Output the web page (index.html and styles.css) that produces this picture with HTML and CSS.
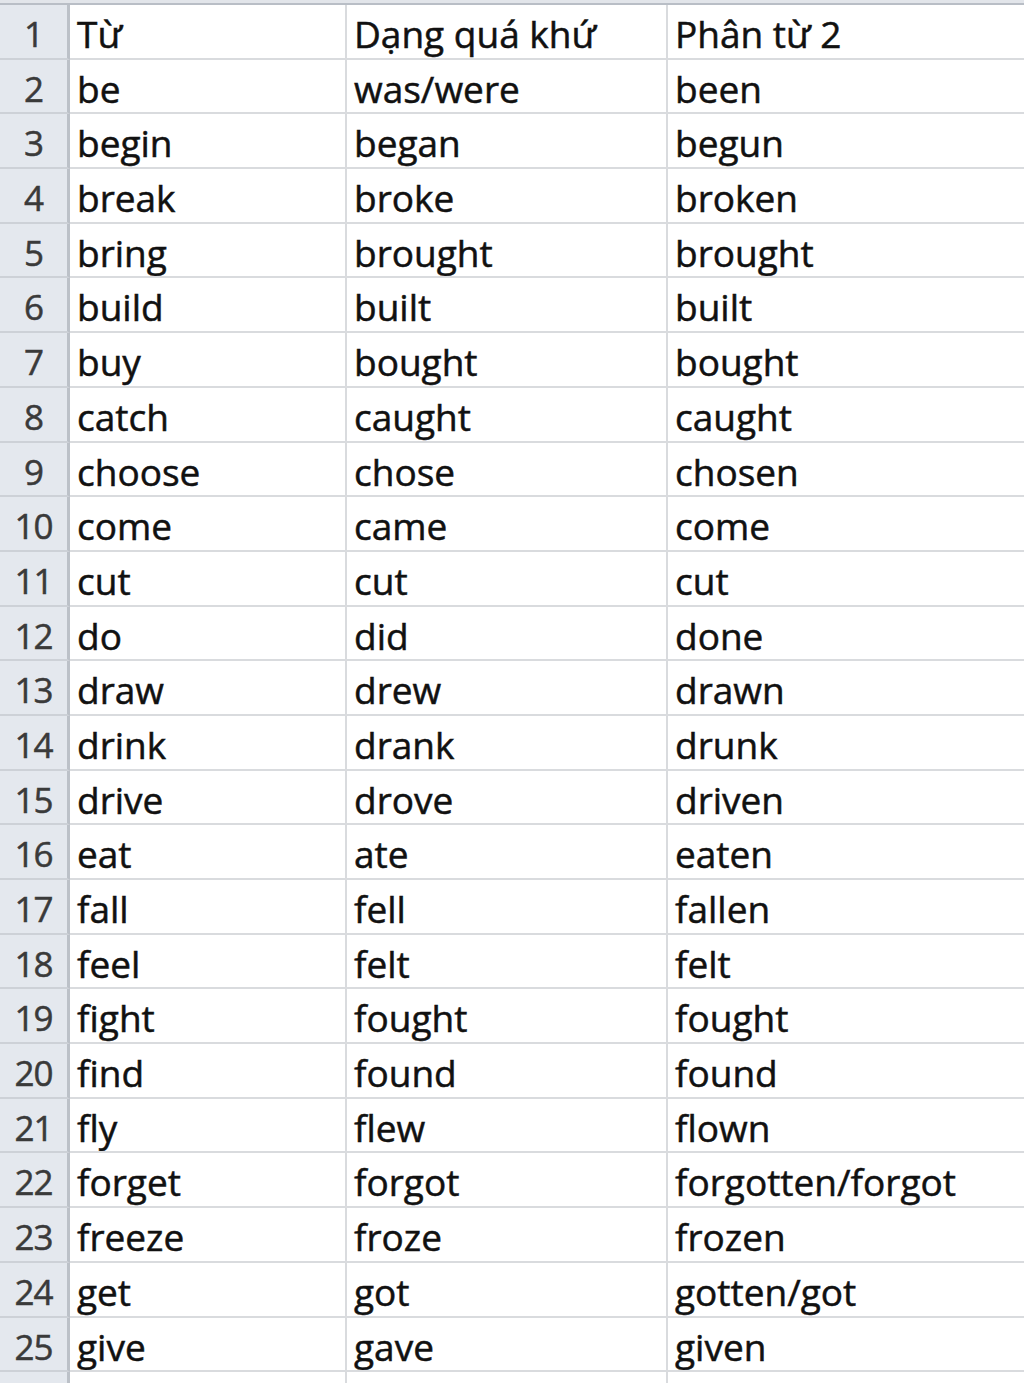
FILE: index.html
```html
<!DOCTYPE html>
<html lang="vi">
<head>
<meta charset="utf-8">
<title>Bảng động từ bất quy tắc</title>
<link rel="stylesheet" href="styles.css">
</head>
<body>
<div class="topbar"></div>
<div class="sheet">
  <div class="rh">1</div><div class="c">Từ</div><div class="c">Dạng quá khứ</div><div class="c">Phân từ 2</div>
  <div class="rh">2</div><div class="c">be</div><div class="c">was/were</div><div class="c">been</div>
  <div class="rh">3</div><div class="c">begin</div><div class="c">began</div><div class="c">begun</div>
  <div class="rh">4</div><div class="c">break</div><div class="c">broke</div><div class="c">broken</div>
  <div class="rh">5</div><div class="c">bring</div><div class="c">brought</div><div class="c">brought</div>
  <div class="rh">6</div><div class="c">build</div><div class="c">built</div><div class="c">built</div>
  <div class="rh">7</div><div class="c">buy</div><div class="c">bought</div><div class="c">bought</div>
  <div class="rh">8</div><div class="c">catch</div><div class="c">caught</div><div class="c">caught</div>
  <div class="rh">9</div><div class="c">choose</div><div class="c">chose</div><div class="c">chosen</div>
  <div class="rh">10</div><div class="c">come</div><div class="c">came</div><div class="c">come</div>
  <div class="rh">11</div><div class="c">cut</div><div class="c">cut</div><div class="c">cut</div>
  <div class="rh">12</div><div class="c">do</div><div class="c">did</div><div class="c">done</div>
  <div class="rh">13</div><div class="c">draw</div><div class="c">drew</div><div class="c">drawn</div>
  <div class="rh">14</div><div class="c">drink</div><div class="c">drank</div><div class="c">drunk</div>
  <div class="rh">15</div><div class="c">drive</div><div class="c">drove</div><div class="c">driven</div>
  <div class="rh">16</div><div class="c">eat</div><div class="c">ate</div><div class="c">eaten</div>
  <div class="rh">17</div><div class="c">fall</div><div class="c">fell</div><div class="c">fallen</div>
  <div class="rh">18</div><div class="c">feel</div><div class="c">felt</div><div class="c">felt</div>
  <div class="rh">19</div><div class="c">fight</div><div class="c">fought</div><div class="c">fought</div>
  <div class="rh">20</div><div class="c">find</div><div class="c">found</div><div class="c">found</div>
  <div class="rh">21</div><div class="c">fly</div><div class="c">flew</div><div class="c">flown</div>
  <div class="rh">22</div><div class="c">forget</div><div class="c">forgot</div><div class="c">forgotten/forgot</div>
  <div class="rh">23</div><div class="c">freeze</div><div class="c">froze</div><div class="c">frozen</div>
  <div class="rh">24</div><div class="c">get</div><div class="c">got</div><div class="c">gotten/got</div>
  <div class="rh">25</div><div class="c">give</div><div class="c">gave</div><div class="c">given</div>
  <div class="rh"></div><div class="c"></div><div class="c"></div><div class="c"></div>
</div>
</body>
</html>
```

FILE: styles.css
```css
html, body {
  margin: 0;
  padding: 0;
  background: #ffffff;
  overflow: hidden;
}

body {
  font-family: "Open Sans", "Liberation Sans", sans-serif;
  color: #111111;
}

.topbar {
  height: 3px;
  background: #e2e5ea;
  border-bottom: 2px solid #b9bec6;
}

.sheet {
  display: grid;
  grid-template-columns: 70px 277px 321px 400px;
  grid-auto-rows: 54.7px;
}

.rh,
.c {
  box-sizing: border-box;
  font-size: 37px;
  line-height: 52.7px;
  padding-top: 3px;
  white-space: nowrap;
  overflow: hidden;
  -webkit-text-stroke: 0.5px currentColor;
}

.rh {
  background: #e4e8ee;
  color: #3a3a3a;
  text-align: center;
  font-size: 35px;
  letter-spacing: -1px;
  border-right: 3px solid #bcc1c8;
  border-bottom: 2px solid #cdd1d7;
}

.c {
  border-right: 2px solid #d9dbde;
  border-bottom: 2px solid #d9dbde;
  padding-left: 7px;
}
```
